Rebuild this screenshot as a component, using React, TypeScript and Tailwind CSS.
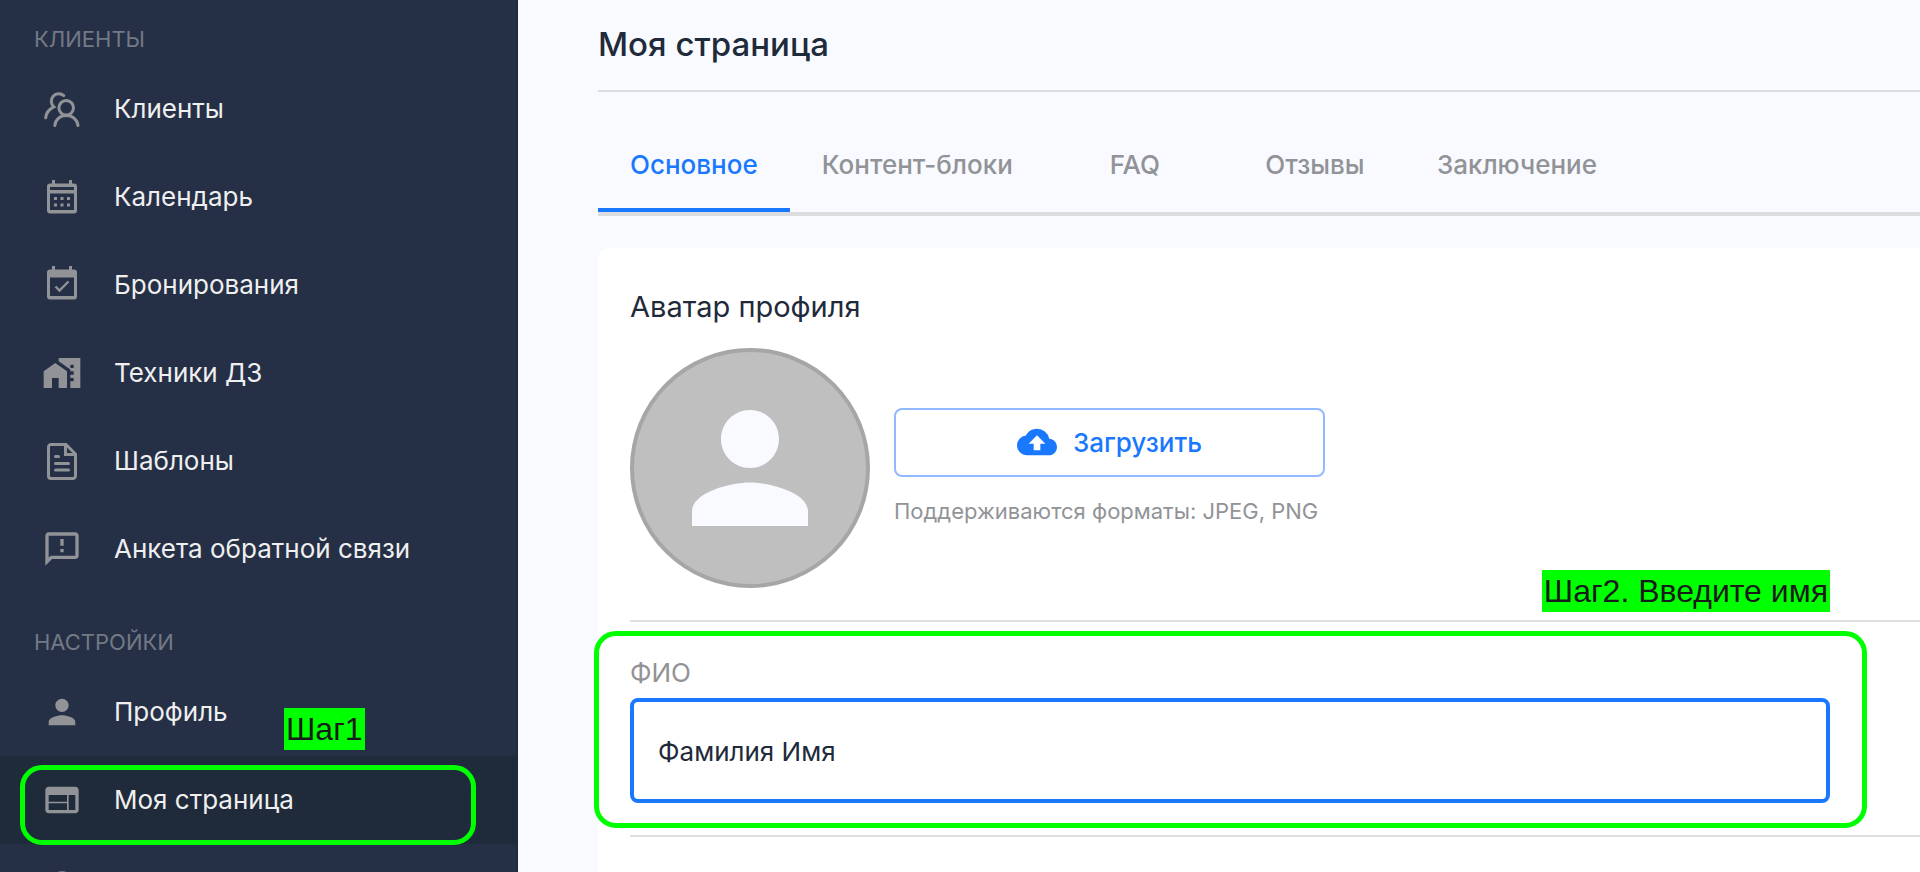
import type { ReactNode } from "react"
import {
  MdCloudUpload,
  MdHelpOutline,
  MdHomeWork,
  MdPerson,
  MdOutlineFeedback,
  MdWeb,
} from "react-icons/md"

type NavItem = {
  label: string
  icon: ReactNode
  active?: boolean
}

function ClientsIcon() {
  return (
    <svg viewBox="0 0 36 36" className="size-9" fill="none" stroke="currentColor" strokeWidth="3" strokeLinecap="round">
      <circle cx="22.2" cy="16.8" r="7.3" />
      <path d="M10.8 34.5C11.3 28.7 16 24.6 22.300 24.600S33.400 28.700 34 34.500" />
      <path d="M19.800 4.600A7.300 7.300 0 1 0 9.800 15.800C5.500 18 2 22 1.700 26.800" />
    </svg>
  )
}

function CalendarIcon() {
  return (
    <svg viewBox="0 0 30 34" className="h-[34px] w-[30px]" fill="currentColor">
      <path
        fillRule="evenodd"
        d="M5 0h3v3.500h14V0h3v3.500h2a3 3 0 0 1 3 3V30.500a3 3 0 0 1-3 3H3a3 3 0 0 1-3-3V6.500a3 3 0 0 1 3-3h2zM3 7v3h24V7zM3 13.500v16.500h24V13.500z"
      />
      <path d="M7 17h3v3H7zM13.500 17h3v3h-3zM20 17h3v3h-3zM7 23.500h3v3H7zM13.500 23.500h3v3h-3zM20 23.500h3v3h-3z" />
    </svg>
  )
}

function BookingIcon() {
  return (
    <svg viewBox="0 0 30 38" className="h-[38px] w-[30px]" fill="currentColor">
      <path
        fillRule="evenodd"
        d="M5 0h3v3.500h14V0h3v3.500h2a3 3 0 0 1 3 3V30.500a3 3 0 0 1-3 3H3a3 3 0 0 1-3-3V6.500a3 3 0 0 1 3-3h2zM3 11.500v18.500h24V11.500z"
      />
      <path d="M8.500 20.500l4 4 9-9" fill="none" stroke="currentColor" strokeWidth="2.400" />
    </svg>
  )
}

function TemplateIcon() {
  return (
    <svg viewBox="0 0 30 37" className="h-[37px] w-[30px]" fill="none" stroke="currentColor" strokeWidth="3">
      <path d="M4 1.500h15L28.500 11V33a2.500 2.500 0 0 1-2.500 2.500H4A2.500 2.500 0 0 1 1.500 33V4A2.500 2.500 0 0 1 4 1.500z" />
      <path d="M18.500 1.500v10h10" />
      <path d="M8.500 13.500h3M8.500 20.500h13M8.500 27h13" strokeLinecap="round" />
    </svg>
  )
}

const clientItems: NavItem[] = [
  { label: "Клиенты", icon: <ClientsIcon /> },
  { label: "Календарь", icon: <CalendarIcon /> },
  { label: "Бронирования", icon: <BookingIcon /> },
  { label: "Техники ДЗ", icon: <MdHomeWork className="size-10" /> },
  { label: "Шаблоны", icon: <TemplateIcon /> },
  { label: "Анкета обратной связи", icon: <MdOutlineFeedback className="size-10" /> },
]

const settingsItems: NavItem[] = [
  { label: "Профиль", icon: <MdPerson className="size-10" /> },
  { label: "Моя страница", icon: <MdWeb className="size-10" />, active: true },
]

const tabs = ["Основное", "Контент-блоки", "FAQ", "Отзывы", "Заключение"]

function NavGroup({ title, items, children }: { title: string; items: NavItem[]; children?: ReactNode }) {
  return (
    <section>
      <h2 className="flex h-[65px] items-end px-[34px] pb-3 text-[22px] leading-7 text-[#737985]">{title}</h2>
      <ul>
        {items.map((item) => (
          <li key={item.label} className="relative">
            <a
              href="#"
              className={`flex h-[88px] items-center gap-8 pl-[42px] text-[26px] text-[#efefef] ${item.active ? "bg-[#1f2a3a]" : ""}`}
            >
              <span className="flex w-10 justify-center text-[#919396]">{item.icon}</span>
              <span className="pb-0.5">{item.label}</span>
            </a>
            {item.active && (
              <div className="pointer-events-none absolute top-[9px] right-10 left-5 h-20 rounded-[22px] border-5 border-[#00ff00]" />
            )}
          </li>
        ))}
        {children}
      </ul>
    </section>
  )
}

export default function App() {
  return (
    <div className="flex h-screen overflow-hidden bg-[#f8faff] font-['Inter','Noto_Sans',sans-serif] text-[#1f2a3a]">
      {/* Sidebar */}
      <nav className="relative flex w-[518px] shrink-0 flex-col gap-[10px] overflow-hidden border-r-2 border-[#1f2a3a] bg-[#253047]">
        <NavGroup title="КЛИЕНТЫ" items={clientItems} />
        <NavGroup title="НАСТРОЙКИ" items={settingsItems}>
          <li className="flex h-[88px] items-center pl-[42px] text-[#919396]">
            <MdHelpOutline className="size-10" />
          </li>
        </NavGroup>
        <mark className="absolute top-[708px] left-[284px] bg-[#00ff00] px-0.5 font-['Liberation_Sans',Arial,sans-serif] text-[32px] leading-[42px] text-[#1a1a1a]">
          Шаг1
        </mark>
      </nav>

      <main className="min-w-0 flex-1 pl-20">
        <h1 className="flex h-[92px] items-center border-b-2 border-[#dcdddf] text-[33px] font-medium">Моя страница</h1>

        <div role="tablist" className="mt-7 flex h-24 border-b-4 border-[#dcdddf]">
          {tabs.map((tab, index) => (
            <button
              key={tab}
              role="tab"
              aria-selected={index === 0}
              className={
                index === 0
                  ? "min-w-[180px] border-b-4 border-[#1a78ff] px-8 text-[26px] font-medium text-[#1a78ff]"
                  : "min-w-[180px] border-b-4 border-transparent px-8 text-[26px] font-medium text-[#919396]"
              }
            >
              {tab}
            </button>
          ))}
        </div>

        {/* Profile card */}
        <div className="mt-8 h-screen rounded-tl-xl bg-white pt-10 pl-8">
          <h2 className="text-[29px] leading-[38px]">Аватар профиля</h2>
          <div className="mt-[22px] flex items-center gap-6 border-b-2 border-[#dedfe0] pb-8">
            <div className="flex size-60 items-center justify-center rounded-full border-4 border-[#a5a6a8] bg-[#bfbfbf]">
              <svg viewBox="4 4 16 16" className="size-[116px] fill-[#f8faff]">
                <path d="M12 12c2.210 0 4-1.790 4-4s-1.790-4-4-4-4 1.790-4 4 1.790 4 4 4zm0 2c-2.670 0-8 1.340-8 4v2h16v-2c0-2.660-5.330-4-8-4z" />
              </svg>
            </div>
            <div className="flex min-w-[431px] flex-col gap-5 pb-1">
              <button className="flex h-[69px] items-center justify-center gap-4 rounded-lg border-2 border-[#90b9ff] text-[26px] font-medium text-[#1a78ff]">
                <MdCloudUpload className="size-10" />
                Загрузить
              </button>
              <p className="text-[22px] leading-7 text-[#919396]">Поддерживаются форматы: JPEG, PNG</p>
            </div>
          </div>

          <div className="border-b-2 border-[#dedfe0] pt-8 pb-8">
            <div className="relative w-full max-w-[1200px]">
              <label htmlFor="full-name" className="block text-[26px] leading-[38px] text-[#919396]">
                ФИО
              </label>
              <input
                id="full-name"
                type="text"
                defaultValue="Фамилия Имя"
                className="mt-[6px] h-[105px] w-full rounded-lg border-4 border-[#1a78ff] bg-white px-6 pt-0.5 text-[26px] outline-none"
              />
              <div className="pointer-events-none absolute -top-[23px] -right-[37px] -bottom-[25px] -left-9 rounded-[22px] border-5 border-[#00ff00]" />
              <mark className="absolute right-0 -top-[84px] bg-[#00ff00] px-0.5 font-['Liberation_Sans',Arial,sans-serif] text-[32px] leading-[42px] text-[#1a1a1a]">
                Шаг2. Введите имя
              </mark>
            </div>
          </div>
        </div>
      </main>
    </div>
  )
}
